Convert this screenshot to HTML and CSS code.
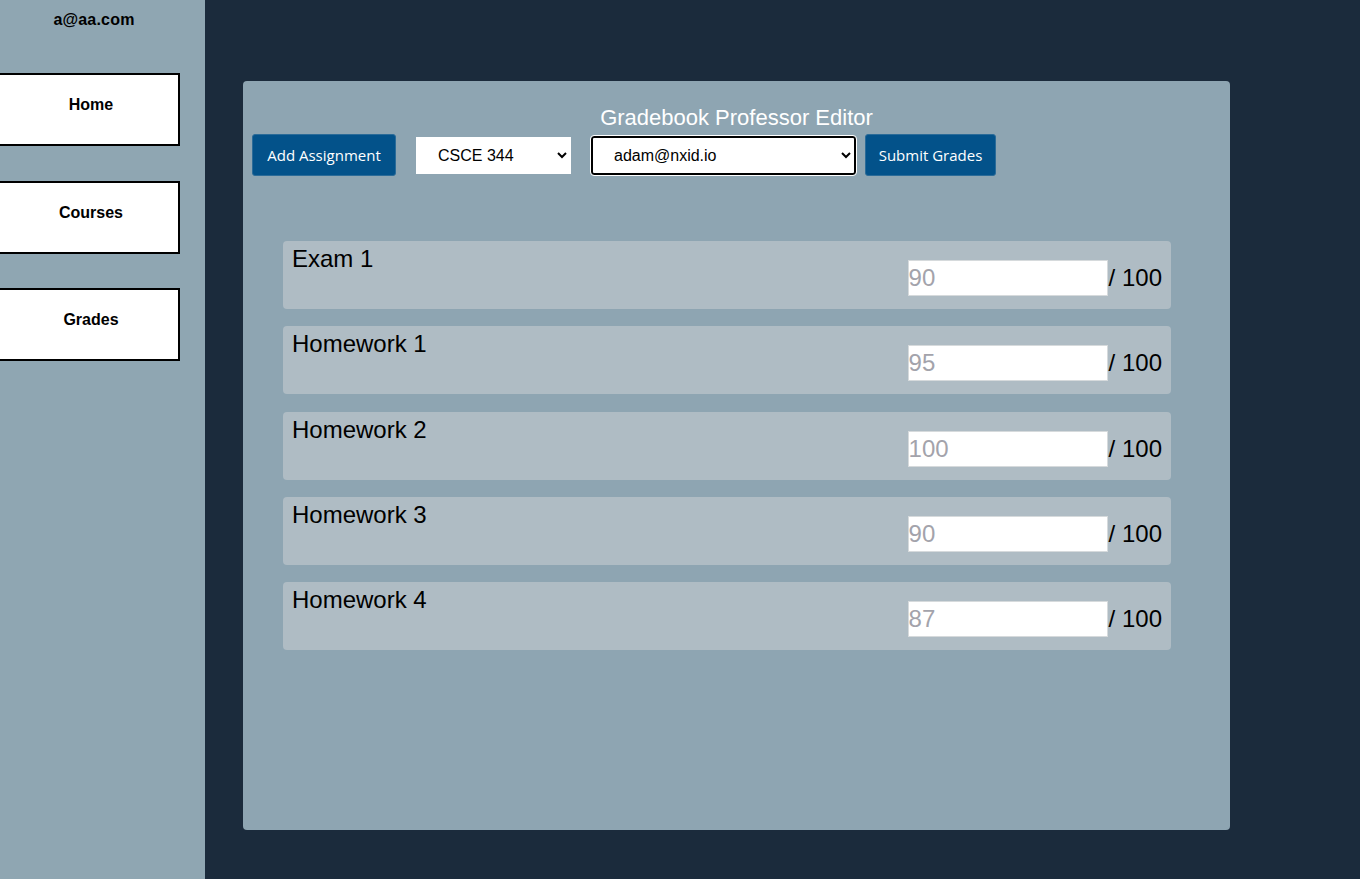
FILE: index.html
```html
<!DOCTYPE html>
<html lang="en">
<head>
<meta charset="utf-8">
<title>Gradebook Professor Editor</title>
<link rel="stylesheet" href="styles.css">
</head>
<body>
<div class="layout">
  <aside class="sidebar">
    <div class="user">a@aa.com</div>
    <nav class="nav">
      <button class="nav-btn">Home</button>
      <button class="nav-btn">Courses</button>
      <button class="nav-btn">Grades</button>
    </nav>
  </aside>
  <main class="main">
    <section class="card">
      <h1 class="title">Gradebook Professor Editor</h1>
      <div class="toolbar">
        <button class="btn btn-add">Add Assignment</button>
        <select class="sel sel-course">
          <option>CSCE 344</option>
        </select>
        <select class="sel sel-student">
          <option>adam@nxid.io</option>
        </select>
        <button class="btn btn-submit">Submit Grades</button>
      </div>
      <div class="list">
        <div class="row">
          <div class="row-label">Exam 1</div>
          <div class="row-grade"><input class="grade" placeholder="90"><span class="out">/ 100</span></div>
        </div>
        <div class="row">
          <div class="row-label">Homework 1</div>
          <div class="row-grade"><input class="grade" placeholder="95"><span class="out">/ 100</span></div>
        </div>
        <div class="row">
          <div class="row-label">Homework 2</div>
          <div class="row-grade"><input class="grade" placeholder="100"><span class="out">/ 100</span></div>
        </div>
        <div class="row">
          <div class="row-label">Homework 3</div>
          <div class="row-grade"><input class="grade" placeholder="90"><span class="out">/ 100</span></div>
        </div>
        <div class="row">
          <div class="row-label">Homework 4</div>
          <div class="row-grade"><input class="grade" placeholder="87"><span class="out">/ 100</span></div>
        </div>
      </div>
    </section>
  </main>
</div>
</body>
</html>
```

FILE: styles.css
```css
html, body {
  margin: 0;
  padding: 0;
  height: 100%;
}
body {
  font-family: "Liberation Sans", Arial, sans-serif;
  background: #1b2b3c;
  overflow: hidden;
}
.layout {
  display: flex;
  height: 879px;
}
.sidebar {
  width: 205px;
  flex: none;
  background: #8fa6b2;
  box-sizing: border-box;
  padding-top: 10px;
}
.user {
  width: 188px;
  text-align: center;
  font-weight: bold;
  font-size: 16px;
  line-height: 19px;
  color: #000;
  letter-spacing: 0.2px;
}
.nav {
  margin-top: 44px;
  display: flex;
  flex-direction: column;
  gap: 34.5px;
}
.nav-btn {
  margin-left: -2px;
  width: 182px;
  height: 73px;
  box-sizing: border-box;
  background: #fff;
  border: 2px solid #000;
  font-family: "Liberation Sans", Arial, sans-serif;
  font-weight: bold;
  font-size: 16px;
  line-height: 18px;
  color: #000;
  padding: 0 0 9px 4px;
  text-align: center;
  display: block;
}
.main {
  flex: 1;
  padding: 81px 0 0 38px;
}
.card {
  width: 987px;
  height: 749px;
  box-sizing: border-box;
  background: #8ea5b2;
  border-radius: 4px;
  padding: 24px 9px 0;
}
.title {
  margin: 0 0 4px;
  text-align: center;
  font-weight: normal;
  font-size: 22px;
  line-height: 25px;
  color: #fff;
}
.toolbar {
  display: flex;
  align-items: center;
  height: 42px;
}
.btn {
  height: 42px;
  box-sizing: border-box;
  background: #03528a;
  color: #fff;
  border: 1px solid #2b6b98;
  border-radius: 3px;
  font-family: "Open Sans", "Noto Sans", sans-serif;
  font-size: 15px;
  padding: 0;
  white-space: nowrap;
}
.btn-add {
  width: 144px;
}
.btn-submit {
  width: 131px;
  margin-left: 9px;
}
.sel {
  font-family: "Liberation Sans", Arial, sans-serif;
  font-size: 16px;
  color: #000;
  background: #fff;
  box-sizing: border-box;
}
.sel-course {
  margin-left: 20px;
  width: 155px;
  height: 37px;
  border: 1px solid #fff;
  border-radius: 0;
  padding-left: 17px;
}
.sel-student {
  margin-left: 20px;
  width: 265px;
  height: 39px;
  border: 2px solid #000;
  border-radius: 3px;
  outline: 1px solid #fff;
  padding-left: 17px;
}
.list {
  margin: 65px 0 0 31px;
  display: flex;
  flex-direction: column;
  gap: 17.25px;
}
.row {
  width: 888px;
  height: 68px;
  box-sizing: border-box;
  background: #afbcc4;
  border-radius: 4px;
  padding: 4px 9px 0;
  display: flex;
  justify-content: space-between;
  align-items: flex-start;
}
.row-label {
  font-size: 24px;
  line-height: 28px;
  color: #000;
}
.row-grade {
  margin-top: 15px;
  display: flex;
  align-items: center;
  font-size: 24px;
  color: #000;
}
.grade {
  width: 200px;
  height: 36px;
  box-sizing: border-box;
  border: 1px solid #d6dadc;
  background: #fff;
  font-family: "Liberation Sans", Arial, sans-serif;
  font-size: 24px;
  padding: 0;
  margin: 0;
}
.grade::placeholder {
  color: #a3a3ab;
}
.out {
  margin-left: 1px;
  line-height: 28px;
}
```
